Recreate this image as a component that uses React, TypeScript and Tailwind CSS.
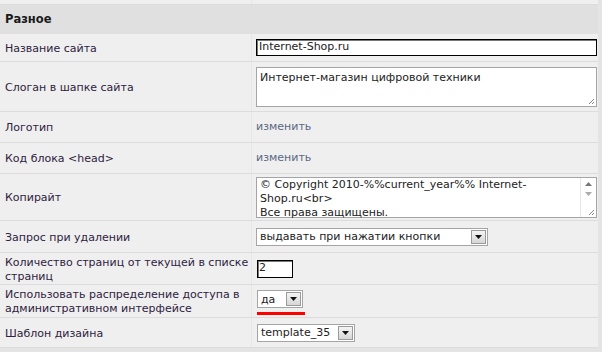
import React from "react";

const font = "font-['DejaVu_Sans',Verdana,sans-serif]";

function Arrow() {
  return (
    <svg width="7" height="4" viewBox="0 0 7 4" className="block">
      <path d="M0 0h7L3.5 4z" fill="#111" />
    </svg>
  );
}

function Select({ value, width }: { value: string; width: string }) {
  return (
    <div className={`flex h-[18px] items-center border border-[#a5a5a5] bg-white pl-[3px] pr-[1px] ${width}`}>
      <span className="flex-1 text-[11px] leading-none text-[#222]">{value}</span>
      <span className="flex h-[14px] w-[15px] items-center justify-center border border-[#9a9a9a] bg-gradient-to-b from-[#f4f4f4] to-[#d6d6d6]">
        <Arrow />
      </span>
    </div>
  );
}

function Grip() {
  return (
    <svg width="7" height="7" viewBox="0 0 7 7" className="absolute bottom-[1px] right-[1px]">
      <path d="M6 1L1 6M6 4L4 6" stroke="#888" strokeWidth="1" />
    </svg>
  );
}

function Row({
  label,
  h,
  children,
}: {
  label: React.ReactNode;
  h: string;
  children?: React.ReactNode;
}) {
  return (
    <div className={`flex border-b border-[#dcdcdc] ${h}`}>
      <div className="flex w-[252px] shrink-0 items-center whitespace-nowrap border-r border-[#e6e6e6] pl-[5px] pt-[2px] text-[11px] leading-[14px] text-[#2e2240]">
        {label}
      </div>
      <div className="flex flex-1 items-center pl-[4px] pr-[4px]">{children}</div>
    </div>
  );
}

export default function App() {
  return (
    <div className={`${font} h-[352px] w-[602px] overflow-hidden bg-[#e4e4e4]`}>
      <div className="w-[598px] bg-[#efefef]">
        <div className="flex h-[5px] border-b border-[#dcdcdc]">
          <div className="w-[252px] border-r border-[#e6e6e6]" />
        </div>
        <div className="flex h-[29px] items-center bg-[#e0e0e0] pl-[5px] text-[11.5px] font-bold text-[#1a1a1a]">
          Разное
        </div>
        <Row label="Название сайта" h="h-[28px]">
          <div className="flex h-[17px] w-[341px] items-center border border-black bg-white pl-[2px] text-[11px] text-[#222] shadow-[inset_1px_1px_0_#777]">
            Internet-Shop.ru
          </div>
        </Row>
        <Row label="Слоган в шапке сайта" h="h-[50px]">
          <div className="relative h-[40px] w-[341px] border border-[#a5a5a5] bg-white pl-[3px] pt-[3px] text-[11px] leading-[14px] text-[#222]">
            Интернет-магазин цифровой техники
            <Grip />
          </div>
        </Row>
        <Row label="Логотип" h="h-[31px]">
          <span className="text-[11px] text-[#5a6784]">изменить</span>
        </Row>
        <Row label="Код блока <head>" h="h-[31px]">
          <span className="text-[11px] text-[#5a6784]">изменить</span>
        </Row>
        <Row label="Копирайт" h="h-[47px]">
          <div className="relative flex h-[41px] w-[341px] border border-[#a5a5a5] bg-white text-[11px] leading-[14px] text-[#222]">
            <div className="flex-1 pl-[3px]">
              © Copyright 2010-%%current_year%% Internet-
              <br />
              Shop.ru&lt;br&gt;
              <br />
              Все права защищены.
            </div>
            <div className="relative flex w-[16px] flex-col items-center border-l border-[#e6e6e6] pt-[4px]">
              <svg width="7" height="4" viewBox="0 0 7 4" className="mb-[6px] block">
                <path d="M3.5 0L7 4H0z" fill="#777" />
              </svg>
              <svg width="7" height="4" viewBox="0 0 7 4" className="block">
                <path d="M0 0h7L3.5 4z" fill="#aaa" />
              </svg>
              <Grip />
            </div>
          </div>
        </Row>
        <Row label="Запрос при удалении" h="h-[32px]">
          <Select value="выдавать при нажатии кнопки" width="w-[232px]" />
        </Row>
        <Row label={<span>Количество страниц от текущей в списке<br />страниц</span>} h="h-[32px]">
          <div className="ml-[1px] flex h-[18px] w-[36px] items-center border border-black bg-white pl-[1px] text-[11px] text-[#222] shadow-[inset_1px_1px_0_#777]">
            2
          </div>
        </Row>
        <Row
          label={<span>Использовать распределение доступа в<br />административном интерфейсе</span>}
          h="h-[33px]"
        >
          <div className="ml-[1px] flex flex-col gap-[4px] pt-[3px]">
            <Select value="да" width="w-[46px]" />
            <div className="h-[3px] w-[48px] bg-[#ff0000]" />
          </div>
        </Row>
        <Row label="Шаблон дизайна" h="h-[30px]">
          <div className="ml-[1px]">
            <Select value="template_35" width="w-[98px]" />
          </div>
        </Row>
      </div>
    </div>
  );
}
